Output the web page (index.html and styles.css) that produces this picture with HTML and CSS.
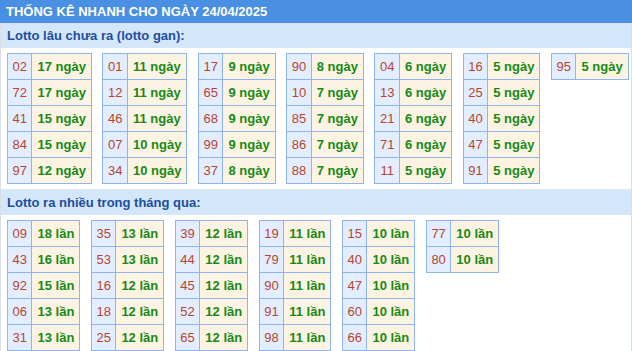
FILE: index.html
```html
<!DOCTYPE html>
<html lang="vi">
<head>
<meta charset="utf-8">
<link rel="stylesheet" href="styles.css">
</head>
<body>
<div class="box">
  <div class="title">THỐNG KÊ NHANH CHO NGÀY 24/04/2025</div>
  <div class="body">
    <div class="sec-head">Lotto lâu chưa ra (lotto gan):</div>
    <div class="tables">
      <table><tr><td class="n">02</td><td class="v">17 ngày</td></tr><tr><td class="n">72</td><td class="v">17 ngày</td></tr><tr><td class="n">41</td><td class="v">15 ngày</td></tr><tr><td class="n">84</td><td class="v">15 ngày</td></tr><tr><td class="n">97</td><td class="v">12 ngày</td></tr></table>
      <table><tr><td class="n">01</td><td class="v">11 ngày</td></tr><tr><td class="n">12</td><td class="v">11 ngày</td></tr><tr><td class="n">46</td><td class="v">11 ngày</td></tr><tr><td class="n">07</td><td class="v">10 ngày</td></tr><tr><td class="n">34</td><td class="v">10 ngày</td></tr></table>
      <table><tr><td class="n">17</td><td class="v">9 ngày</td></tr><tr><td class="n">65</td><td class="v">9 ngày</td></tr><tr><td class="n">68</td><td class="v">9 ngày</td></tr><tr><td class="n">99</td><td class="v">9 ngày</td></tr><tr><td class="n">37</td><td class="v">8 ngày</td></tr></table>
      <table><tr><td class="n">90</td><td class="v">8 ngày</td></tr><tr><td class="n">10</td><td class="v">7 ngày</td></tr><tr><td class="n">85</td><td class="v">7 ngày</td></tr><tr><td class="n">86</td><td class="v">7 ngày</td></tr><tr><td class="n">88</td><td class="v">7 ngày</td></tr></table>
      <table><tr><td class="n">04</td><td class="v">6 ngày</td></tr><tr><td class="n">13</td><td class="v">6 ngày</td></tr><tr><td class="n">21</td><td class="v">6 ngày</td></tr><tr><td class="n">71</td><td class="v">6 ngày</td></tr><tr><td class="n">11</td><td class="v">5 ngày</td></tr></table>
      <table><tr><td class="n">16</td><td class="v">5 ngày</td></tr><tr><td class="n">25</td><td class="v">5 ngày</td></tr><tr><td class="n">40</td><td class="v">5 ngày</td></tr><tr><td class="n">47</td><td class="v">5 ngày</td></tr><tr><td class="n">91</td><td class="v">5 ngày</td></tr></table>
      <table><tr><td class="n">95</td><td class="v">5 ngày</td></tr></table>
    </div>
    <div class="sec-head">Lotto ra nhiều trong tháng qua:</div>
    <div class="tables">
      <table><tr><td class="n">09</td><td class="v">18 lần</td></tr><tr><td class="n">43</td><td class="v">16 lần</td></tr><tr><td class="n">92</td><td class="v">15 lần</td></tr><tr><td class="n">06</td><td class="v">13 lần</td></tr><tr><td class="n">31</td><td class="v">13 lần</td></tr></table>
      <table><tr><td class="n">35</td><td class="v">13 lần</td></tr><tr><td class="n">53</td><td class="v">13 lần</td></tr><tr><td class="n">16</td><td class="v">12 lần</td></tr><tr><td class="n">18</td><td class="v">12 lần</td></tr><tr><td class="n">25</td><td class="v">12 lần</td></tr></table>
      <table><tr><td class="n">39</td><td class="v">12 lần</td></tr><tr><td class="n">44</td><td class="v">12 lần</td></tr><tr><td class="n">45</td><td class="v">12 lần</td></tr><tr><td class="n">52</td><td class="v">12 lần</td></tr><tr><td class="n">65</td><td class="v">12 lần</td></tr></table>
      <table><tr><td class="n">19</td><td class="v">11 lần</td></tr><tr><td class="n">79</td><td class="v">11 lần</td></tr><tr><td class="n">90</td><td class="v">11 lần</td></tr><tr><td class="n">91</td><td class="v">11 lần</td></tr><tr><td class="n">98</td><td class="v">11 lần</td></tr></table>
      <table><tr><td class="n">15</td><td class="v">10 lần</td></tr><tr><td class="n">40</td><td class="v">10 lần</td></tr><tr><td class="n">47</td><td class="v">10 lần</td></tr><tr><td class="n">60</td><td class="v">10 lần</td></tr><tr><td class="n">66</td><td class="v">10 lần</td></tr></table>
      <table><tr><td class="n">77</td><td class="v">10 lần</td></tr><tr><td class="n">80</td><td class="v">10 lần</td></tr></table>
    </div>
  </div>
</div>
</body>
</html>
```
FILE: styles.css
```css
html, body {
  margin: 0;
  padding: 0;
  background: #fff;
}
body {
  font-family: "Liberation Sans", Arial, sans-serif;
  font-size: 13px;
}
.box {
  width: 632px;
}
.title {
  background: #4a90e2;
  color: #fff;
  font-weight: bold;
  font-size: 13px;
  height: 23px;
  line-height: 23px;
  padding-left: 6px;
}
.body {
  border-left: 1px solid #d8dde6;
  border-right: 1px solid #d8dde6;
}
.sec-head {
  background: #d4e6fa;
  color: #1c4f9f;
  font-size: 13px;
  font-weight: bold;
  height: 25px;
  line-height: 25px;
  padding-left: 6px;
  border-top: 1px solid #e3e8ef;
}
.body > .sec-head:first-child {
  border-top: 0;
}
.tables {
  display: flex;
  flex-wrap: wrap;
  align-items: flex-start;
  gap: 10.6px;
  padding: 5px 0 5px 6px;
}
table {
  border-collapse: collapse;
}
td {
  border: 1px solid #8fb4f2;
  height: 26px;
  box-sizing: border-box;
  line-height: 15px;
  white-space: nowrap;
}
td.n {
  background: #e2eeff;
  color: #b8452a;
  text-align: center;
  padding: 0 4.5px;
}
td.v {
  background: #fdf3e2;
  color: #168a17;
  font-weight: bold;
  padding: 0 5px;
}
```
